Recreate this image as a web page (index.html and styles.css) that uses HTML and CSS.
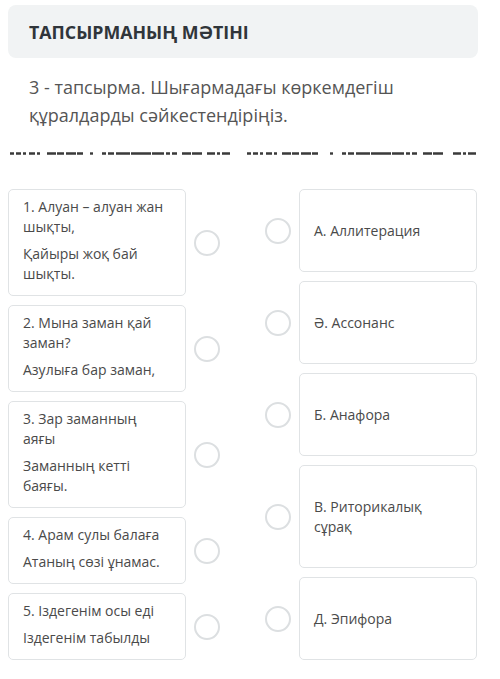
FILE: index.html
```html
<!DOCTYPE html>
<html>
<head>
  <title>Тапсырманың мәтіні</title>
  <meta name="viewport" content="width=device-width, initial-scale=1.0">
  <link rel="stylesheet" href="styles.css">
</head>
<body>
  <!-- Header -->
  <div class="task-head">ТАПСЫРМАНЫҢ МӘТІНІ</div>

  <div class="task-text">3 - тапсырма. Шығармадағы көркемдегіш құралдарды сәйкестендіріңіз.</div>

  <!-- clipped line under the task text -->
  <svg class="dash-line" width="470" height="3" viewBox="0 0 470 3">
    <g stroke="#3a3a3a" stroke-width="2.4">
      <line x1="2" y1="1.5" x2="32" y2="1.5" stroke-dasharray="4 2 5 2 3 3 6 2" />
      <line x1="39" y1="1.5" x2="75" y2="1.5" stroke-dasharray="9 1 7 2 10 1" />
      <line x1="82" y1="1.5" x2="85" y2="1.5" />
      <line x1="94" y1="1.5" x2="169" y2="1.5" stroke-dasharray="4 2 6 2 14 1 20 1 12 2" />
      <line x1="174" y1="1.5" x2="194" y2="1.5" stroke-dasharray="9 1 10" />
      <line x1="199" y1="1.5" x2="222" y2="1.5" stroke-dasharray="8 2 3 2 8" />
      <line x1="239" y1="1.5" x2="269" y2="1.5" stroke-dasharray="4 2 5 2 3 3 6 2" />
      <line x1="274" y1="1.5" x2="310" y2="1.5" stroke-dasharray="9 1 7 2 10 1" />
      <line x1="322" y1="1.5" x2="325" y2="1.5" />
      <line x1="334" y1="1.5" x2="409" y2="1.5" stroke-dasharray="4 2 6 2 14 1 20 1 12 2" />
      <line x1="415" y1="1.5" x2="435" y2="1.5" stroke-dasharray="9 1 10" />
      <line x1="445" y1="1.5" x2="469" y2="1.5" stroke-dasharray="8 2 3 2 8" />
    </g>
  </svg>

  <!-- Matching -->
  <div class="match">
    <div class="match-col">
      <div class="match-row">
        <div class="card">
          <p>1. Алуан – алуан жан шықты,</p>
          <p>Қайыры жоқ бай шықты.</p>
        </div>
        <span class="dot"></span>
      </div>
      <div class="match-row">
        <div class="card">
          <p>2. Мына заман қай заман?</p>
          <p>Азулыға бар заман,</p>
        </div>
        <span class="dot"></span>
      </div>
      <div class="match-row">
        <div class="card">
          <p>3. Зар заманның аяғы</p>
          <p>Заманның кетті баяғы.</p>
        </div>
        <span class="dot"></span>
      </div>
      <div class="match-row">
        <div class="card">
          <p>4. Арам сулы балаға</p>
          <p>Атаның сөзі ұнамас.</p>
        </div>
        <span class="dot"></span>
      </div>
      <div class="match-row">
        <div class="card">
          <p>5. Іздегенім осы еді</p>
          <p>Іздегенім табылды</p>
        </div>
        <span class="dot"></span>
      </div>
    </div>

    <div class="match-col right">
      <div class="match-row">
        <span class="dot"></span>
        <div class="card answer">А. Аллитерация</div>
      </div>
      <div class="match-row">
        <span class="dot"></span>
        <div class="card answer">Ә. Ассонанс</div>
      </div>
      <div class="match-row">
        <span class="dot"></span>
        <div class="card answer">Б. Анафора</div>
      </div>
      <div class="match-row">
        <span class="dot"></span>
        <div class="card answer">В. Риторикалық сұрақ</div>
      </div>
      <div class="match-row">
        <span class="dot"></span>
        <div class="card answer">Д. Эпифора</div>
      </div>
    </div>
  </div>
</body>
</html>
```

FILE: styles.css
```css
/* Base Styles */
body, html {
  margin: 0;
  padding: 0;
  background: #fff;
  font-family: 'Open Sans', 'Noto Sans', sans-serif;
  color: #4a4a4a;
}

/* Header */
.task-head {
  margin: 5px 22px 0 8px;
  height: 53px;
  padding: 0 21px;
  display: flex;
  align-items: center;
  background: #f1f3f4;
  border-radius: 8px;
  font-size: 17.8px;
  font-weight: bold;
  color: #30353a;
}

.task-text {
  margin: 15px 40px 0 29px;
  font-size: 18px;
  line-height: 28px;
  color: #555;
}

.dash-line {
  display: block;
  margin: 23px 0 0 8px;
}

/* Matching columns */
.match {
  display: flex;
  gap: 45px;
  margin: 34px 0 0 8px;
}

.match-col {
  display: flex;
  flex-direction: column;
  gap: 9px;
}

.match-row {
  display: flex;
  align-items: center;
  gap: 8px;
}

.card {
  box-sizing: border-box;
  width: 178px;
  padding: 7px 14px 4px;
  background: #fff;
  border: 1px solid #e0e3e5;
  border-radius: 5px;
  font-size: 14px;
  line-height: 20px;
}

.card p {
  margin: 0 0 7px;
}

.card.answer {
  padding: 30.5px 14px;
}

.dot {
  box-sizing: border-box;
  width: 26px;
  height: 26px;
  border: 2.5px solid #dcdfe1;
  border-radius: 50%;
  background: #fff;
  flex-shrink: 0;
}
```
